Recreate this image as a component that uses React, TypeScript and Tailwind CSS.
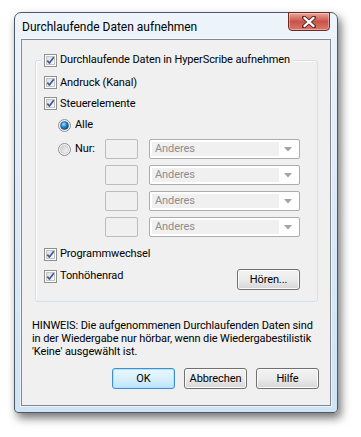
import type { ReactNode } from "react";

function CheckBox() {
  return (
    <svg width="13" height="13" viewBox="0 0 13 13" className="shrink-0">
      <defs>
        <linearGradient id="cbg" x1="0" y1="0" x2="1" y2="1">
          <stop offset="0" stopColor="#dcdcdc" />
          <stop offset="1" stopColor="#fbfbfb" />
        </linearGradient>
      </defs>
      <rect x="0.5" y="0.5" width="12" height="12" fill="#fff" stroke="#8e8f8f" />
      <rect x="2.5" y="2.5" width="8" height="8" fill="url(#cbg)" stroke="#c2c4c6" />
      <path d="M3.3 6.6 L5.4 9 L9.8 3.2" fill="none" stroke="#43579a" strokeWidth="1.7" strokeLinejoin="round" />
    </svg>
  );
}

function Radio({ on }: { on?: boolean }) {
  return (
    <svg width="13" height="13" viewBox="0 0 13 13" className="shrink-0">
      <defs>
        <radialGradient id="rdOn" cx="0.4" cy="0.35" r="0.7">
          <stop offset="0" stopColor="#a9e3ff" />
          <stop offset="0.45" stopColor="#2a8fd8" />
          <stop offset="1" stopColor="#0b3d7a" />
        </radialGradient>
        <linearGradient id="rdOff" x1="0" y1="0" x2="1" y2="1">
          <stop offset="0" stopColor="#cfcfcf" />
          <stop offset="1" stopColor="#f6f6f6" />
        </linearGradient>
      </defs>
      <circle cx="6.5" cy="6.5" r="6" fill="#f4f4f4" stroke="#8e8f8f" />
      <circle cx="6.5" cy="6.5" r="4" fill={on ? "url(#rdOn)" : "url(#rdOff)"} stroke={on ? "#1b4f8f" : "#bdbdbd"} strokeWidth="0.6" />
    </svg>
  );
}

function Check({ children }: { children: ReactNode }) {
  return (
    <label className="flex items-center gap-[3px] whitespace-nowrap leading-[16px]">
      <CheckBox />
      <span>{children}</span>
    </label>
  );
}

function Combo() {
  return (
    <div className="flex h-[20px] w-[151px] items-stretch rounded-[2px] border border-[#acacac] bg-white p-[2px]">
      <div className="flex w-[127px] items-center bg-[#f0f0f0] pl-[3px] text-[#8d8d8d]">Anderes</div>
      <div className="flex flex-1 items-center justify-center">
        <svg width="8" height="5" viewBox="0 0 8 5">
          <path d="M0 0 H8 L4 4.5 Z" fill="#a3a3a3" />
        </svg>
      </div>
    </div>
  );
}

function Edit() {
  return <div className="h-[20px] w-[34px] rounded-[2px] border border-[#bcbcbc] bg-[#f0f0f0]" />;
}

function Btn({ children, primary }: { children: ReactNode; primary?: boolean }) {
  return (
    <button
      className={
        primary
          ? "h-[21px] w-[63px] rounded-[3px] border border-[#3c8fd0] bg-gradient-to-b from-[#eaf6fd] via-[#d9f0fc] to-[#bde5fb] shadow-[inset_0_0_0_1px_#aee3fb] leading-[19px]"
          : "h-[21px] w-[63px] rounded-[3px] border border-[#707070] bg-gradient-to-b from-[#f3f3f3] via-[#ebebeb] to-[#d6d6d6] shadow-[inset_0_0_0_1px_#fcfcfc] leading-[19px]"
      }
    >
      {children}
    </button>
  );
}

export default function App() {
  return (
    <main className="min-h-[437px] bg-white pl-[14px] pt-[12px] font-['Roboto',sans-serif] text-[11px] tracking-[-0.1px] text-black">
      <div className="relative flex h-[401px] w-[324px] flex-col rounded-t-[7px] rounded-b-[4px] border border-[#4d5966] bg-gradient-to-b from-[#eef4fa] via-[#dbe9f6] to-[#cfe4f5] px-[6px] pb-[6px] shadow-[3px_5px_10px_rgba(0,0,0,0.55)]">
        <div className="flex h-[26px] items-center pl-[1px] pt-[1px] text-[12px] tracking-normal text-black">Durchlaufende Daten aufnehmen</div>

        <div className="absolute right-[7px] top-[-1px] flex h-[19px] w-[42px] items-center justify-center rounded-b-[4px] border border-[#6d2a24] bg-gradient-to-b from-[#e7a699] via-[#c9524a] to-[#d9796b] shadow-[inset_0_0_0_1px_rgba(255,255,255,0.35)]">
          <svg width="14" height="12" viewBox="0 0 14 12">
            <path d="M2 1.5 L12 10.5 M12 1.5 L2 10.5" stroke="#5b231e" strokeWidth="4" strokeLinecap="round" />
            <path d="M2.4 1.9 L11.6 10.1 M11.6 1.9 L2.4 10.1" stroke="#ffffff" strokeWidth="2.2" strokeLinecap="round" />
          </svg>
        </div>

        <div className="flex flex-1 flex-col border border-[#828790] bg-[#f0f0f0] shadow-[0_0_0_1px_rgba(255,255,255,0.6)]">
          <div className="relative ml-[13px] mr-[12px] mt-[20px] rounded-[3px] border border-[#d5dfe5] pb-[11px] pl-[8px] pr-[17px] pt-[11px] shadow-[inset_1px_1px_0_#fff]">
            <div className="absolute left-[5px] top-[-9px] bg-[#f0f0f0] px-[3px]">
              <Check>Durchlaufende Daten in HyperScribe aufnehmen</Check>
            </div>

            <div className="flex h-[21px] items-center">
              <Check>Andruck (Kanal)</Check>
            </div>
            <div className="flex h-[21px] items-center">
              <Check>Steuerelemente</Check>
            </div>
            <div className="flex h-[22px] items-center pl-[14px]">
              <label className="flex items-center gap-[4px] leading-[16px]">
                <Radio on />
                <span>Alle</span>
              </label>
            </div>

            {[0, 1, 2, 3].map((i) => (
              <div key={i} className="flex h-[26px] items-center">
                <div className="w-[62px] pl-[14px]">
                  {i === 0 && (
                    <label className="flex items-center gap-[4px] leading-[16px]">
                      <Radio />
                      <span>Nur:</span>
                    </label>
                  )}
                </div>
                <Edit />
                <div className="ml-[11px]">
                  <Combo />
                </div>
              </div>
            ))}

            <div className="flex h-[28px] items-center">
              <Check>Programmwechsel</Check>
            </div>
            <div className="flex h-[22px] items-start justify-between">
              <Check>Tonhöhenrad</Check>
              <div className="mt-[1px]">
                <Btn>Hören...</Btn>
              </div>
            </div>
          </div>

          <p className="mt-[17px] pl-[10px] pr-[8px] leading-[13px]">
            HINWEIS: Die aufgenommenen Durchlaufenden Daten sind in der Wiedergabe nur hörbar, wenn die Wiedergabestilistik 'Keine' ausgewählt ist.
          </p>

          <div className="mt-auto flex justify-end gap-[9px] pb-[16px] pr-[11px]">
            <Btn primary>OK</Btn>
            <Btn>Abbrechen</Btn>
            <Btn>Hilfe</Btn>
          </div>
        </div>
      </div>
    </main>
  );
}
